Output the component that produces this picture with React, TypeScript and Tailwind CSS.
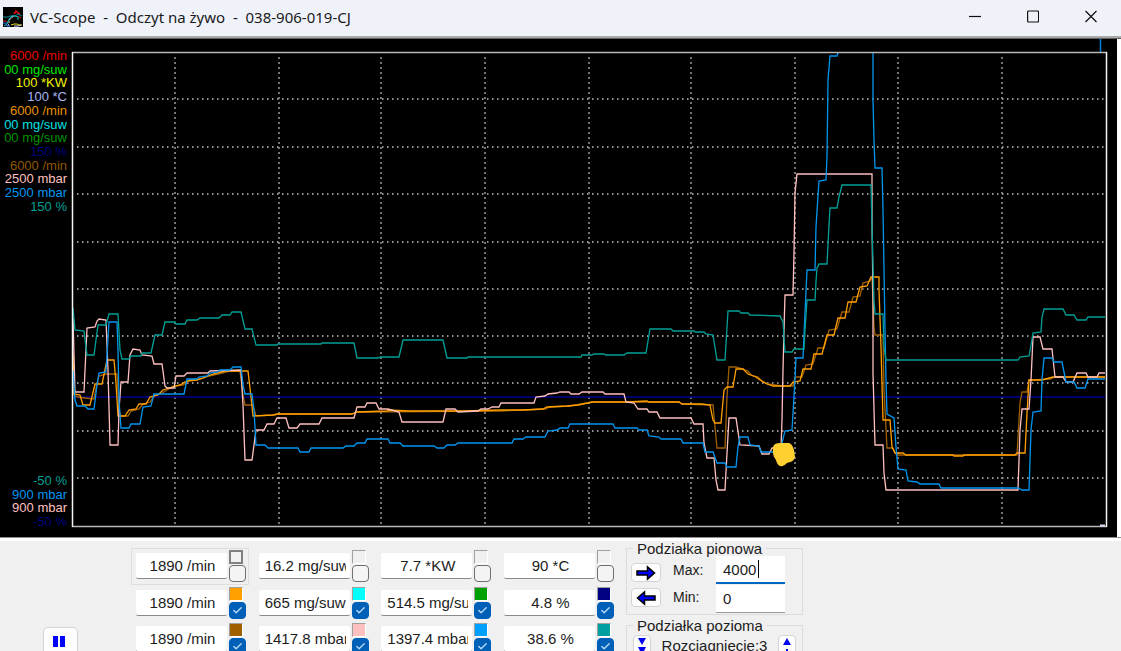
import React from 'react';
import { Check } from 'lucide-react';

const topLabels = [
  { text: '6000 /min', color: 'text-[#e80000]' },
  { text: '00 mg/suw', color: 'text-[#00e600]' },
  { text: '100 *KW', color: 'text-[#f0f000]' },
  { text: '100 *C', color: 'text-[#a8b4f0]' },
  { text: '6000 /min', color: 'text-[#e89200]' },
  { text: '00 mg/suw', color: 'text-[#00e0e0]' },
  { text: '00 mg/suw', color: 'text-[#009600]' },
  { text: '150 %', color: 'text-[#000080]' },
  { text: '6000 /min', color: 'text-[#905800]' },
  { text: '2500 mbar', color: 'text-[#ffc0c0]' },
  { text: '2500 mbar', color: 'text-[#0096f0]' },
  { text: '150 %', color: 'text-[#00a098]' },
];

const bottomLabels = [
  { text: '-50 %', color: 'text-[#00a098]' },
  { text: '900 mbar', color: 'text-[#0096f0]' },
  { text: '900 mbar', color: 'text-[#ffc0c0]' },
  { text: '-50 %', color: 'text-[#000080]' },
];

const gridX = [175, 279, 381, 485, 589, 691, 795, 898, 1002];
const gridY = [99, 147, 194, 242, 289, 336, 383, 431, 478];

const series = [
  {
    name: 'rpm-set',
    color: '#a06000',
    points:
      '73,394 77,397 85,398 94,399 97,383 99,376 106,374 117,374 119,410 121,416 128,416 131,411 139,409 143,404 150,402 155,395 161,394 167,390 174,386 183,385 190,380 200,379 209,376 218,374 230,371 240,371 243,395 245,405 253,405 256,416 273,415 278,414 352,414 357,412 500,411 523,410 545,409 550,407 570,406 592,402 627,402 649,402 679,402 682,404 713,405 715,427 717,448 725,448 727,397 729,367 736,367 743,369 748,371 751,375 758,377 762,381 768,384 782,386 793,386 794,381 796,377 802,377 806,365 813,364 818,348 824,348 829,330 837,329 842,312 849,312 853,297 860,296 863,283 870,281 872,277 874,327 875,335 883,335 884,390 887,448 893,448 895,453 897,455 1017,455 1020,403 1022,392 1027,392 1029,380 1050,379 1055,377 1105,377',
  },
  {
    name: 'rpm',
    color: '#ffa000',
    points:
      '73,353 74,394 80,395 83,405 90,405 95,384 102,384 107,360 114,360 116,383 118,416 125,416 129,410 136,409 139,404 146,404 150,397 158,395 163,390 172,387 180,385 187,381 197,380 203,378 213,374 225,371 248,371 251,397 253,416 273,415 278,414 352,414 357,412 387,411 388,410 409,411 464,411 500,410 523,410 543,409 547,407 567,406 578,405 588,403 592,402 627,402 647,401 649,402 679,402 682,404 702,404 710,405 713,420 715,423 721,423 724,390 727,387 733,387 736,369 743,369 748,374 756,377 760,380 767,384 773,386 790,386 793,382 800,381 803,369 811,369 814,354 822,354 827,335 834,335 838,318 845,318 848,302 856,302 860,287 867,286 871,277 879,277 879,290 881,347 883,420 890,420 892,447 895,453 903,453 906,455 953,455 954,456 963,456 964,455 1015,455 1017,453 1025,453 1027,413 1029,380 1042,380 1053,377 1105,377',
  },
  {
    name: 'boost-set',
    color: '#ffc0c0',
    points:
      '73,318 75,392 84,392 87,328 95,327 97,321 99,319 106,320 108,370 110,445 118,445 119,410 121,382 128,382 130,355 133,349 140,350 142,355 152,356 154,364 162,364 165,386 167,388 174,388 176,376 184,376 187,373 208,373 210,371 241,370 243,405 245,460 252,460 256,430 264,430 267,424 274,424 277,418 286,418 289,428 297,428 300,424 319,424 322,418 354,418 357,407 365,407 367,403 376,403 379,409 388,409 399,412 402,422 443,422 446,409 455,409 458,412 478,411 481,409 488,409 492,407 499,407 501,403 534,403 536,397 545,396 548,394 557,393 560,392 569,392 571,394 579,394 582,392 603,392 605,394 624,394 626,402 634,403 638,409 647,409 649,412 657,412 660,418 691,418 694,424 703,424 704,443 707,458 714,458 716,480 718,490 725,490 727,453 729,418 736,418 740,445 759,446 762,454 769,454 772,448 781,448 782,420 783,370 784,330 785,295 793,295 794,253 795,193 797,174 872,174 872,220 873,300 873,373 875,445 883,445 884,473 886,490 1018,490 1020,430 1022,409 1029,409 1031,380 1033,337 1040,337 1043,349 1052,349 1054,368 1055,377 1063,377 1066,382 1073,382 1077,373 1086,373 1088,377 1097,377 1099,373 1105,373',
  },
  {
    name: 'boost',
    color: '#0096f0',
    points:
      '73,370 75,400 77,406 85,406 88,409 94,409 97,385 99,373 106,372 109,322 117,322 118,350 119,400 121,428 129,428 131,424 140,424 143,407 151,406 154,394 184,394 187,379 197,379 199,377 207,376 210,373 218,372 220,370 230,370 233,367 241,367 243,385 245,394 252,394 254,410 256,445 265,445 268,448 298,448 300,452 309,452 311,448 343,448 346,446 354,446 357,443 365,443 367,439 388,439 390,443 400,443 403,446 434,446 437,448 444,448 447,445 455,445 458,443 512,443 514,439 523,439 526,437 545,437 548,431 557,430 560,428 568,428 570,424 613,424 615,428 637,428 639,430 647,430 649,436 659,437 661,439 681,439 683,443 703,443 705,452 713,452 717,463 725,463 727,467 736,467 738,447 740,437 748,437 750,445 759,446 761,452 773,452 782,443 785,431 792,430 794,397 796,358 803,358 805,313 807,270 815,270 816,227 819,181 826,180 827,157 828,80 830,56 837,56 838,53',
  },
  {
    name: 'boost-tail',
    color: '#0096f0',
    points:
      '873,53 873,100 874,140 875,168 882,168 883,210 885,330 886,380 887,414 894,418 896,447 898,469 906,470 908,481 917,482 920,484 939,484 941,488 1018,488 1022,490 1029,490 1031,430 1033,412 1041,411 1042,380 1044,358 1052,358 1054,362 1062,362 1066,382 1074,382 1077,388 1085,388 1088,379 1105,379',
  },
  {
    name: 'duty',
    color: '#00a098',
    points:
      '73,308 75,330 84,331 87,355 94,355 98,325 106,325 109,314 118,314 120,350 122,359 129,359 131,356 141,356 142,353 151,353 155,335 162,335 165,322 175,322 176,324 185,324 187,320 197,320 200,318 219,318 222,315 230,315 232,312 241,312 245,329 252,329 256,345 277,345 278,344 321,344 322,343 354,343 357,358 378,358 380,357 399,357 403,340 443,340 447,358 467,358 468,357 581,357 582,355 592,355 594,354 604,354 606,355 624,355 627,353 646,353 650,329 671,329 673,331 694,331 695,332 704,332 706,334 713,335 717,360 725,360 728,311 739,311 741,313 748,313 750,315 780,316 783,322 785,352 792,352 794,349 804,349 805,330 807,300 815,300 816,282 817,268 819,264 827,264 829,225 830,208 837,208 839,197 842,185 871,185 872,227 874,300 875,314 883,314 884,347 886,360 1018,360 1020,357 1029,356 1031,345 1033,333 1041,332 1042,317 1044,309 1063,309 1066,315 1074,315 1077,320 1086,320 1088,317 1105,317',
  },
];

const channels = [
  [
    { value: '1890 /min', swatch: 'bg-[#f0f0f0]', checked: false },
    { value: '16.2 mg/suw', swatch: 'bg-[#f0f0f0]', checked: false },
    { value: '7.7 *KW', swatch: 'bg-[#f0f0f0]', checked: false },
    { value: '90 *C', swatch: 'bg-[#f0f0f0]', checked: false },
  ],
  [
    { value: '1890 /min', swatch: 'bg-[#ffa000]', checked: true },
    { value: '665 mg/suw', swatch: 'bg-[#00ffff]', checked: true },
    { value: '514.5 mg/suw', swatch: 'bg-[#00a000]', checked: true },
    { value: '4.8 %', swatch: 'bg-[#000080]', checked: true },
  ],
  [
    { value: '1890 /min', swatch: 'bg-[#a06000]', checked: true },
    { value: '1417.8 mbar', swatch: 'bg-[#ffc0c0]', checked: true },
    { value: '1397.4 mbar', swatch: 'bg-[#00a0ff]', checked: true },
    { value: '38.6 %', swatch: 'bg-[#00a0a0]', checked: true },
  ],
];

const AppIcon: React.FC = () => (
  <svg width="20" height="20" viewBox="0 0 20 20" fill="none" aria-hidden="true">
    <rect width="20" height="20" fill="#000" />
    <path d="M11 7l2-3 2 2 2 1" stroke="#e01010" strokeWidth="1.5" />
    <path d="M0 14h3l2 2M15 9l3 2" stroke="#e01010" />
    <path d="M0 10h5l2-1h5l3-2 4 2" stroke="#008c9c" />
    <path d="M1 19l3-2 2-5 3-3 3 0 3 1v3" stroke="#18c8c8" />
    <path d="M5 19l2-7 4-3" stroke="#d8d8d8" strokeDasharray="2 1" />
    <path d="M0 16h3l1 3h3" stroke="#2080f0" />
    <path d="M8 18l3-1h3l2 1h3" stroke="#e8e020" />
    <path d="M11 19h4l3-1" stroke="#d8d8ff" />
  </svg>
);

const windowButtons = [
  { label: 'Minimalizuj', icon: <path d="M0 6.500H12" /> },
  { label: 'Maksymalizuj', icon: <rect x="0.6" y="1" width="11" height="11" rx="1" /> },
  { label: 'Zamknij', icon: <path d="M0.500 1L11.500 12M11.500 1L0.500 12" /> },
];

const TitleBar: React.FC = () => (
  <header className="flex h-9 shrink-0 items-center bg-[#f0f2fa] pb-[3px] pl-[3px] pr-px">
    <AppIcon />
    <h1 className="ml-[7px] flex-1 whitespace-pre font-['Noto_Sans',sans-serif] text-[15px] leading-5 text-[#1a1a1a]">
      {'VC-Scope  -  Odczyt na żywo  -  038-906-019-CJ'}
    </h1>
    {windowButtons.map((button) => (
      <button
        key={button.label}
        type="button"
        aria-label={button.label}
        className="flex h-8 w-[58px] items-center justify-center"
      >
        <svg width="12" height="13" viewBox="0 0 12 13" fill="none" stroke="#101010" strokeWidth="1.200">
          {button.icon}
        </svg>
      </button>
    ))}
  </header>
);

const ScaleLabels: React.FC<{ items: { text: string; color: string }[]; className: string }> = ({
  items,
  className,
}) => (
  <ul className={`flex flex-col items-end justify-between ${className}`}>
    {items.map((item, index) => (
      <li key={index} className={`whitespace-nowrap text-[13px] leading-3 ${item.color}`}>
        {item.text}
      </li>
    ))}
  </ul>
);

const Plot: React.FC = () => (
  <svg
    className="h-full min-w-0 flex-1"
    viewBox="68 39 1049 498"
    preserveAspectRatio="none"
    fill="none"
    role="img"
    aria-label="Wykres pomiarów"
  >
    {gridX.map((x) => (
      <line key={x} x1={x} y1="57" x2={x} y2="525" stroke="#747474" strokeWidth="2" strokeDasharray="2 3" />
    ))}
    {gridY.map((y) => (
      <line key={y} x1="77" y1={y} x2="1104" y2={y} stroke="#949494" strokeWidth="2" strokeDasharray="1.5 3.5" />
    ))}
    <line x1="73" y1="397" x2="1105" y2="397" stroke="#000090" strokeWidth="1.5" />
    {series.map((s) => (
      <polyline key={s.name} points={s.points} stroke={s.color} strokeWidth="1.3" />
    ))}
    {/* frame */}
    <path d="M72 52.5H1107M72 526.5H1107" stroke="#b8b8b8" strokeWidth="1.5" />
    <path d="M72.5 52V527M1106.5 52V527" stroke="#f4f4f4" strokeWidth="1.5" />
    <path d="M1100.5 39V52" stroke="#0080d8" strokeWidth="1.5" />
    <path d="M1100 525.5h5" stroke="#d8d8f8" strokeWidth="2" />
    {/* marker */}
    <path
      d="M774 445C776 443 779 443 783 443L789 443C792 444 793 447 794 450L795 457C794 461 791 462 787 463C785 465 782 467 780 466C776 464 777 460 774 457C773 454 772 448 774 445Z"
      fill="#ffd030"
    />
  </svg>
);

const CheckBox: React.FC<{ checked: boolean; label: string }> = ({ checked, label }) => (
  <label className="relative block size-[17px]">
    <input
      type="checkbox"
      defaultChecked={checked}
      aria-label={label}
      className="peer block size-[17px] appearance-none rounded-[4px] border border-[#707070] bg-[#f4f4f4] checked:border-[#0060b8] checked:bg-[#0060b8]"
    />
    <Check
      size={11}
      strokeWidth={3}
      className="pointer-events-none absolute left-[3px] top-[3px] hidden text-[#b8d8f4] peer-checked:block"
    />
  </label>
);

const ArrowIcon: React.FC<{ left?: boolean }> = ({ left }) => (
  <svg width="20" height="16" viewBox="0 0 20 16" className={left ? 'rotate-180' : ''} aria-hidden="true">
    <path d="M1 6H11.500V2L18.500 8L11.500 14V10H1Z" fill="#0000ff" stroke="#000" strokeWidth="1.5" />
  </svg>
);

const TriangleIcon: React.FC<{ up?: boolean }> = ({ up }) => (
  <svg width="10" height="18" viewBox="0 0 10 18" fill="#0000f0" aria-hidden="true">
    {up ? <path d="M5 1L9 8H1ZM4 12h2v6h-2Z" /> : <path d="M1 1H9L5 8ZM1 10H9L5 18Z" />}
  </svg>
);

const smallButton =
  'flex items-center justify-center rounded-[4px] border border-[#d4d4d4] bg-[#fdfdfd]';

const Controls: React.FC = () => (
  <section className="flex h-[110px] shrink-0 items-start overflow-hidden bg-[#f0f0f0] text-[15px] text-[#1c1c1c]">
    <button
      type="button"
      aria-label="Pauza"
      className="ml-[43px] mt-[86px] flex h-9 w-[35px] shrink-0 justify-center gap-[2px] rounded-[5px] border border-[#d4d4d4] bg-[#fdfdfd] pr-1 pt-2"
    >
      <span className="h-[11px] w-[5px] bg-[#0000ff]" />
      <span className="h-[11px] w-[5px] bg-[#0000ff]" />
    </button>

    <div className="ml-[53px] mt-[7px] flex w-[486px] shrink-0 flex-col">
      {channels.map((row, r) => (
        <div key={r} className={`flex justify-between ${r === 1 ? 'h-9' : 'h-[37px]'}`}>
          {row.map((channel, c) => {
            const first = r === 0 && c === 0;
            return (
              <div
                key={c}
                className={`flex w-[118px] gap-[2px] border pl-1 ${
                  first ? 'border-[#dedede]' : 'border-transparent'
                }`}
              >
                <input
                  type="text"
                  readOnly
                  value={channel.value}
                  aria-label={`Kanał ${r * 4 + c + 1}`}
                  className="mt-1 h-[26px] w-[91px] rounded-[2px] border-b border-[#8a8a8a] bg-white pl-1.5 pr-1 text-center"
                />
                <div className="flex flex-col gap-px pt-px">
                  <span
                    className={`block size-[14px] border ${
                      first ? 'border-2 border-[#808080]' : 'border-b-white border-l-[#a0a0a0] border-r-white border-t-[#a0a0a0]'
                    } ${channel.swatch}`}
                  />
                  <CheckBox checked={channel.checked} label={`Pokaż kanał ${r * 4 + c + 1}`} />
                </div>
              </div>
            );
          })}
        </div>
      ))}
    </div>

    <div className="ml-[9px] flex w-[177px] shrink-0 flex-col">
      <fieldset className="h-[74px] border border-[#dcdcdc] pl-1">
        <legend className="ml-[2px] h-[15px] px-1 leading-[15px]">Podziałka pionowa</legend>
        <div className="grid grid-cols-[30px_55px_69px] gap-y-px">
          <button type="button" aria-label="Zwiększ" className={`${smallButton} mt-[7px] h-[19px]`}>
            <ArrowIcon />
          </button>
          <label htmlFor="max" className="pl-3 pt-1 text-[14px] leading-5">
            Max:
          </label>
          <div className="relative">
            <input
              id="max"
              type="text"
              defaultValue="4000"
              className="block h-[28px] w-full border-b-2 border-[#0067c0] bg-white pl-[7px] outline-none"
            />
            <span className="absolute left-[42px] top-1 h-[18px] w-px bg-black" />
          </div>
          <button type="button" aria-label="Zmniejsz" className={`${smallButton} mt-[3px] h-[19px]`}>
            <ArrowIcon left />
          </button>
          <label htmlFor="min" className="pl-3 pt-[2px] text-[14px] leading-5">
            Min:
          </label>
          <input
            id="min"
            type="text"
            defaultValue="0"
            className="block h-[28px] w-full border-b border-[#9a9a9a] bg-white pl-[7px] outline-none"
          />
        </div>
      </fieldset>
      <fieldset className="mt-[3px] h-[60px] border border-[#dcdcdc] px-1.5">
        <legend className="h-[15px] px-1 leading-[15px]">Podziałka pozioma</legend>
        <div className="flex items-center justify-between pt-[2px]">
          <button type="button" aria-label="Zwęź" className={`${smallButton} h-[22px] w-[18px]`}>
            <TriangleIcon />
          </button>
          <span className="leading-5">Rozciągnięcie:3</span>
          <button type="button" aria-label="Rozciągnij" className={`${smallButton} h-[22px] w-[18px]`}>
            <TriangleIcon up />
          </button>
        </div>
      </fieldset>
    </div>
  </section>
);

const App: React.FC = () => (
  <div className="flex h-screen min-h-[400px] flex-col overflow-hidden bg-white font-['Liberation_Sans',Arial,sans-serif]">
    <TitleBar />
    <div className="h-[3px] shrink-0 border-b border-[#606060] bg-[#a8a8a8]" />
    <main className="mr-1 flex min-h-0 flex-1 bg-black">
      <div className="flex w-[68px] shrink-0 flex-col justify-between pb-[9px] pr-px pt-[11px]">
        <ScaleLabels items={topLabels} className="h-[163px]" />
        <ScaleLabels items={bottomLabels} className="h-[53px]" />
      </div>
      <Plot />
    </main>
    <div className="h-1 shrink-0 border-t border-[#909090] bg-white" />
    <Controls />
  </div>
);

export default App;
